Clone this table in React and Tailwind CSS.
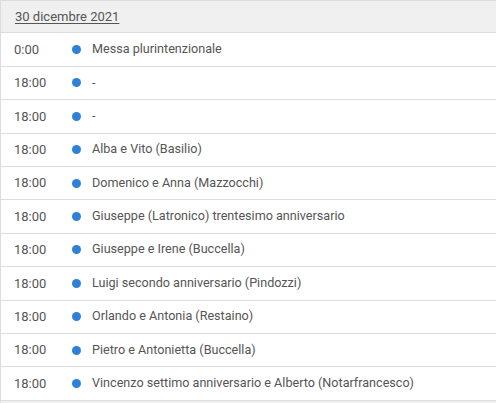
const rows = [
  ["0:00", "Messa plurintenzionale"],
  ["18:00", "-"],
  ["18:00", "-"],
  ["18:00", "Alba e Vito (Basilio)"],
  ["18:00", "Domenico e Anna (Mazzocchi)"],
  ["18:00", "Giuseppe (Latronico) trentesimo anniversario"],
  ["18:00", "Giuseppe e Irene (Buccella)"],
  ["18:00", "Luigi secondo anniversario (Pindozzi)"],
  ["18:00", "Orlando e Antonia (Restaino)"],
  ["18:00", "Pietro e Antonietta (Buccella)"],
  ["18:00", "Vincenzo settimo anniversario e Alberto (Notarfrancesco)"],
];

export default function App() {
  return (
    <div className="w-[496px] h-[403px] overflow-hidden bg-white text-[#555] font-['Roboto',sans-serif]">
      <div className="border-l border-[#ddd]">
        <div className="h-[33.4px] flex items-center px-[14px] text-[13px] bg-[#f0f0f0] border-t border-b border-[#ddd]">
          <span className="underline underline-offset-2">30 dicembre 2021</span>
        </div>
        {rows.map(([time, text], i) => (
          <div key={i} className="h-[33.4px] flex items-center text-[12.6px] border-b border-[#ddd]">
            <span className="w-[71px] pl-[13px] text-[13px]">{time}</span>
            <span className="w-[9px] h-[9px] rounded-full bg-[#2f80d8]"></span>
            <span className="pl-[11px]">{text}</span>
          </div>
        ))}
        <div className="h-[10px] bg-[#f0f0f0]"></div>
      </div>
    </div>
  );
}
